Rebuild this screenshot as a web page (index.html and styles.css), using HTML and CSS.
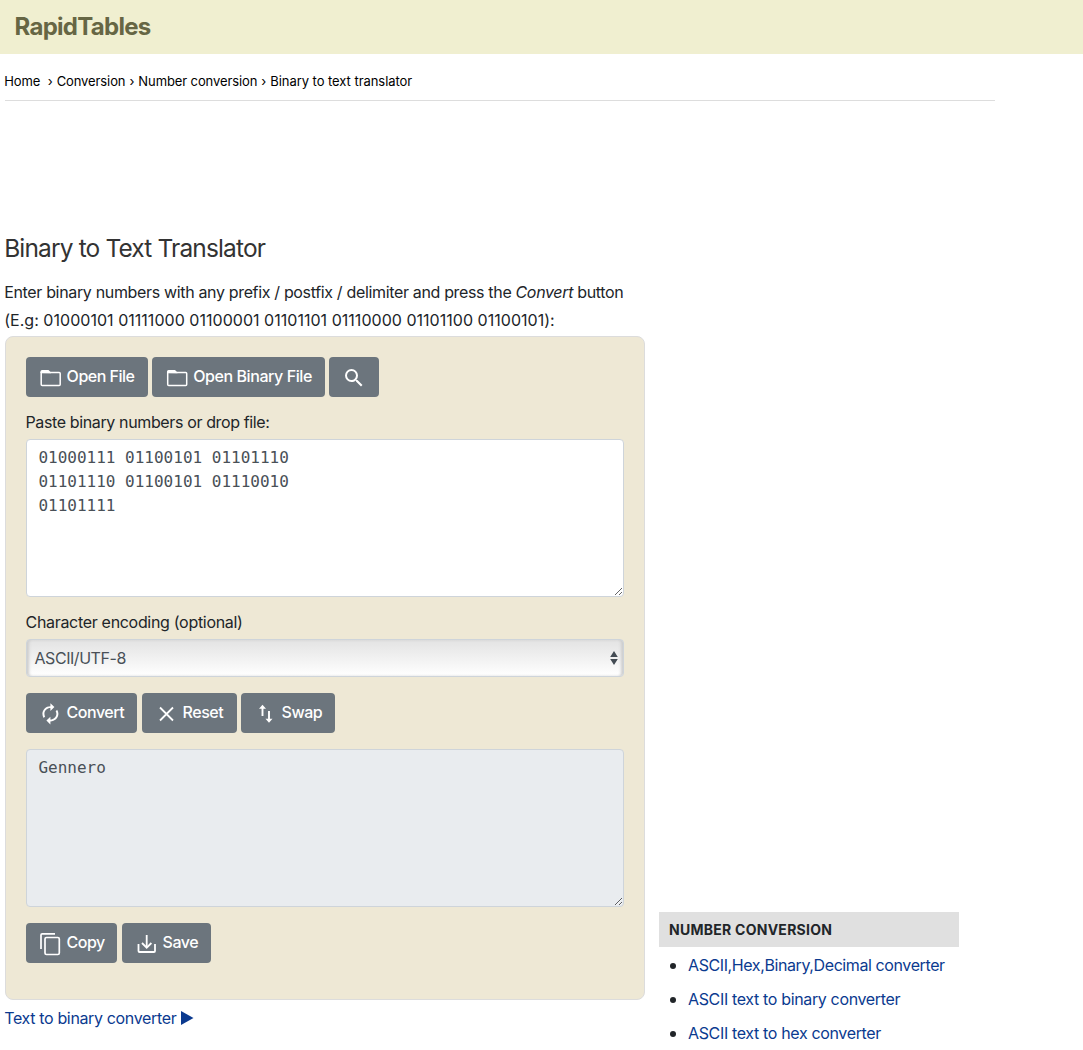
FILE: index.html
```html
<!DOCTYPE html>
<html lang="en">
<head>
<meta charset="utf-8">
<title>Binary to Text Translator</title>
<link rel="stylesheet" href="styles.css">
</head>
<body>
<header class="top"><a class="logo">RapidTables</a></header>
<nav class="crumbs"><span class="c1">Home</span><span class="sep">›</span><span class="c2">Conversion</span><span class="sep">›</span><span class="c3">Number conversion</span><span class="sep">›</span><span class="c4">Binary to text translator</span></nav>
<div class="columns">
<main class="main">
<h1><span>Binary to Text Translator</span></h1>
<p class="intro"><span class="i1">Enter binary numbers with any prefix / postfix / delimiter and press the <i>Convert</i> button</span><br><span class="i2">(E.g: 01000101 01111000 01100001 01101101 01110000 01101100 01100101):</span></p>
<form class="panel">
<div class="row">
<button type="button" class="btn open"><svg viewBox="0 0 41 40"><path d="M15.2 15.5h18q1 0 1 1v11q0 1-1 1h-17q-1 0-1-1z" fill="none" stroke="#fff" stroke-width="1.5"/><path d="M14.5 16v-1.500q0-1.500 1.500-1.500h6.500l2.500 2.500v.8z" fill="#fff"/></svg><span>Open File</span></button>
<button type="button" class="btn openbin"><svg viewBox="0 0 41 40"><path d="M15.700 15.500h18q1 0 1 1v11q0 1-1 1h-17q-1 0-1-1z" fill="none" stroke="#fff" stroke-width="1.500"/><path d="M15 16v-1.500q0-1.500 1.500-1.500h6.500l2.500 2.500v.8z" fill="#fff"/></svg><span>Open Binary File</span></button>
<button type="button" class="btn search" aria-label="Search"><svg viewBox="0 0 41 40"><path transform="translate(13 9)" fill="#fff" d="M15.500 14h-.79l-.28-.27A6.471 6.471 0 0 0 16 9.500 6.500 6.500 0 1 0 9.500 16c1.610 0 3.090-.59 4.230-1.570l.27.28v.79l5 4.990L20.490 19l-4.990-5zm-6 0C7.010 14 5 11.990 5 9.500S7.010 5 9.500 5 14 7.010 14 9.500 11.990 14 9.500 14z"/></svg></button>
</div>
<label class="l1"><span>Paste binary numbers or drop file:</span></label>
<textarea class="area" spellcheck="false">01000111 01100101 01101110
01101110 01100101 01110010
01101111</textarea>
<label class="l2"><span>Character encoding (optional)</span></label>
<div class="select"><span>ASCII/UTF-8</span><svg width="8" height="16" viewBox="0 0 8 16"><path d="M4 1l3.800 6H.2zM4 15l3.800-6H.2z" fill="#444c54"/></svg></div>
<div class="row">
<button type="button" class="btn convert"><svg viewBox="0 0 41 40"><path transform="translate(12.400 9.300) scale(1 .96)" fill="#fff" d="M12 6v3l4-4-4-4v3c-4.420 0-8 3.580-8 8 0 1.570.46 3.030 1.240 4.260L6.700 14.800c-.45-.83-.7-1.790-.7-2.800 0-3.310 2.690-6 6-6zm6.760 1.740L17.300 9.200c.44.84.7 1.790.7 2.800 0 3.310-2.690 6-6 6v-3l-4 4 4 4v-3c4.420 0 8-3.580 8-8 0-1.570-.46-3.030-1.240-4.260z"/></svg><span>Convert</span></button>
<button type="button" class="btn reset"><svg viewBox="0 0 41 40"><path d="M18 14.500l13 13m0-13l-13 13" stroke="#fff" stroke-width="1.800"/></svg><span>Reset</span></button>
<button type="button" class="btn swap"><svg viewBox="0 0 41 40"><path d="M21.500 23v-9M28 18v9" stroke="#fff" stroke-width="1.900"/><path d="M18 15.800l3.500-4 3.500 4zM24.500 25.800l3.500 4 3.500-4z" fill="#fff"/></svg><span>Swap</span></button>
</div>
<textarea class="area out" readonly spellcheck="false">Gennero</textarea>
<div class="row">
<button type="button" class="btn copy"><svg viewBox="0 0 41 40"><rect x="19" y="14.500" width="14.300" height="17" rx="1.500" fill="none" stroke="#fff" stroke-width="1.700"/><path d="M15 26V12q0-1.200 1.200-1.200H29" fill="none" stroke="#fff" stroke-width="1.700"/></svg><span>Copy</span></button>
<button type="button" class="btn save"><svg viewBox="0 0 41 40"><path d="M16.500 21v7q0 1 1 1h14.500q1 0 1-1v-7M24.700 12v12" fill="none" stroke="#fff" stroke-width="1.800"/><path d="M20 20l4.700 4.700 4.700-4.700" fill="none" stroke="#fff" stroke-width="1.800"/></svg><span>Save</span></button>
</div>
</form>
<a class="next"><span>Text to binary converter</span><svg width="13" height="14" viewBox="0 0 13 14"><path d="M0 0l12.500 7L0 14z" fill="#0b3a8f"/></svg></a>
</main>
<aside class="side">
<h2><span>NUMBER CONVERSION</span></h2>
<ul>
<li><a class="s1">ASCII,Hex,Binary,Decimal converter</a></li>
<li><a class="s2">ASCII text to binary converter</a></li>
<li><a class="s3">ASCII text to hex converter</a></li>
</ul>
</aside>
</div>
</body>
</html>
```
FILE: styles.css
```css
* { box-sizing: border-box; }
body { margin: 0; height: 1050px; overflow: hidden; background: #fff; color: #212529; font: 16px/28px Inter, "Liberation Sans", sans-serif; letter-spacing: -.35px; white-space: nowrap; }
.top { height: 54px; padding-left: 14.5px; background: #f0efd0; }
.logo { color: #666644; font-size: 24px; font-weight: 700; line-height: 54px; letter-spacing: -.72px; }
.crumbs { display: flex; gap: 4.8px; width: 990px; height: 47px; margin-left: 5px; border-bottom: 1px solid #ddd; color: #000; font-size: 13px; line-height: 55px; letter-spacing: -.1px; text-indent: -.8px; }
.c1 { margin-right: 3.5px; }
.c4 { letter-spacing: -.05px; }
.columns { display: flex; gap: 14px; margin-left: 5px; padding-top: 127px; }
.main { width: 640px; }
h1 { margin: 0; color: #333; font-size: 24.5px; font-weight: 400; line-height: 40px; letter-spacing: -.86px; text-indent: -.8px; }
.intro { margin: 10px 0 2px; text-indent: -.8px; }
.i1 { letter-spacing: -.34px; }
.i2 { margin-left: -.8px; letter-spacing: .03px; }
.panel { height: 664px; padding: 20px; border: 1px solid #dcdcdc; border-radius: 8px; background: #eee8d5; }
.row { display: flex; gap: 4px; height: 40px; }
.btn { display: flex; padding: 0; border: 0; border-radius: 4px; background: #6c757d; color: #fff; font: 500 16px/39px Inter, "Liberation Sans", sans-serif; letter-spacing: -.5px; text-align: left; height: 40px; }
.btn svg { width: 41px; height: 40px; flex: none; }
.btn span { margin-left: -.4px; }
.open { width: 122px; }
.openbin { width: 173px; letter-spacing: -.42px; }
.openbin span { margin-left: .2px; }
.search { width: 50px; }
.convert { width: 111px; margin-right: 1px; }
.reset { width: 95px; }
.swap { width: 94px; }
.copy { width: 91px; margin-right: 1px; }
.save { width: 89px; }
label { display: block; height: 42px; line-height: 50px; text-indent: -.5px; }
.l1 { letter-spacing: -.37px; }
.l2 { letter-spacing: -.31px; }
.area { display: block; width: 598px; height: 158px; margin: 0; padding: 6px 12px 6px 11.4px; border: 1px solid #ced4da; border-radius: 4px; outline: 0; resize: vertical; background: #fff; color: #495057; font: 16px/24px "DejaVu Sans Mono", "Liberation Mono", monospace; letter-spacing: 0; }
.out { margin: 16px 0; background: #e9ecef; }
.select { display: flex; align-items: center; justify-content: space-between; height: 38px; margin-bottom: 16px; padding: 0 5.5px 0 7.5px; border: 1px solid #ced4da; border-radius: 4px; background: linear-gradient(#e3e3e3, #fff); box-shadow: inset 3px 0 3px -1px #ccc, inset -3px 0 3px -1px #ccc; color: #495057; letter-spacing: -.45px; }
.next { display: flex; align-items: center; gap: 5px; height: 36px; color: #0b3a8f; text-indent: -.8px; }
.side { width: 300px; margin-top: 684px; }
h2 { margin: 0; height: 35px; padding-left: 10px; background: #e0e0e0; font-size: 14px; line-height: 36px; letter-spacing: .26px; }
ul { margin: 1px 0 0; padding-left: 29px; list-style: none; }
li { display: flex; align-items: center; height: 34px; line-height: 34px; }
li::before { content: ""; flex: none; width: 6px; height: 6px; margin: 1px 12px 0 -18px; border-radius: 50%; background: #212529; }
li a { color: #0b3a8f; }
.s1 { letter-spacing: -.4px; }
```
